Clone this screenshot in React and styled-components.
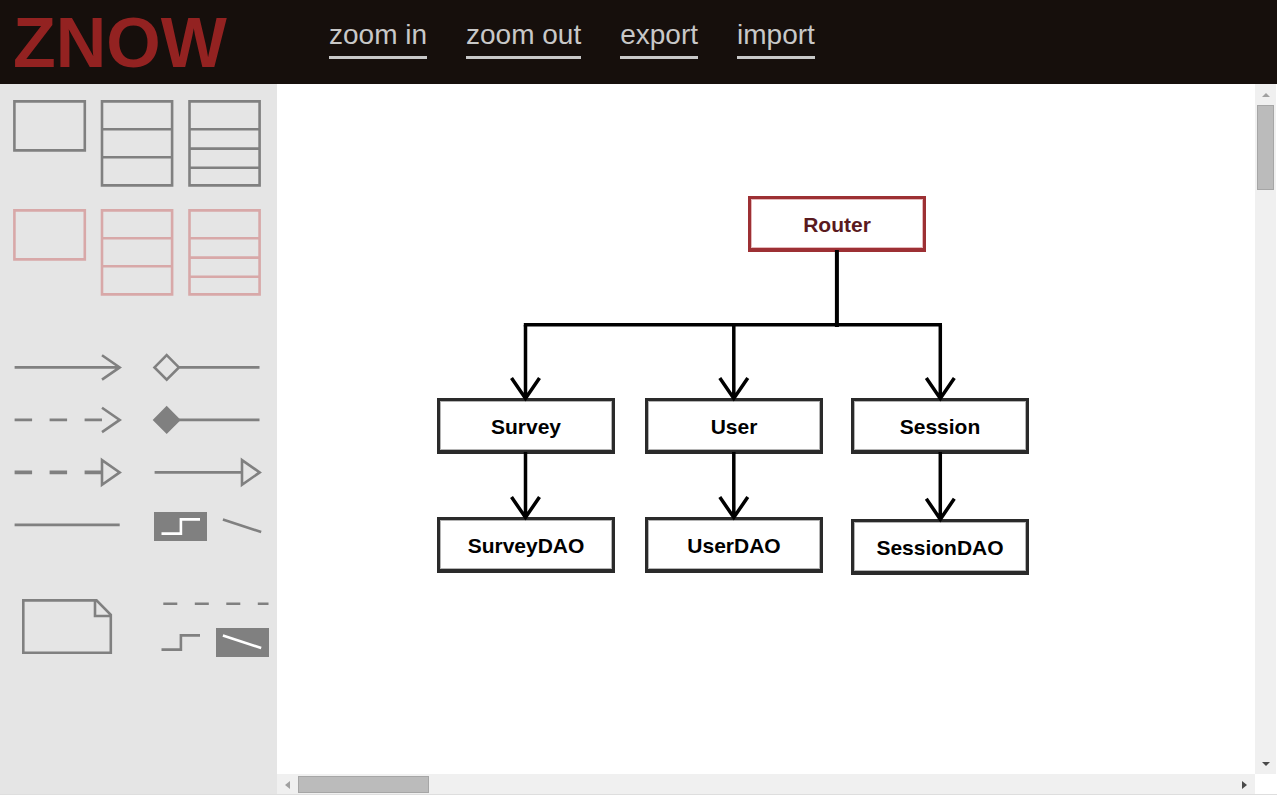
import React from "react";
import styled, { createGlobalStyle } from "styled-components";

const GlobalStyle = createGlobalStyle`
  * { box-sizing: border-box; }
  body {
    margin: 0;
    font-family: Arial, "Liberation Sans", sans-serif;
    background: #fff;
  }
`;

const Page = styled.div`
  display: flex;
  flex-direction: column;
  height: 100vh;
  border-bottom: 1px solid #dedede;
`;

const Header = styled.header`
  display: flex;
  flex: none;
  height: 84px;
  padding-left: 13px;
  background: #160f0c;
`;

const Logo = styled.h1`
  flex: none;
  width: 316px;
  margin: 0;
  font-size: 70px;
  line-height: 86px;
  font-weight: bold;
  color: #932221;
`;

const Nav = styled.nav`
  display: flex;
  align-items: flex-start;
  gap: 39px;
  padding-top: 18px;
`;

const NavLink = styled.a`
  height: 41px;
  border-bottom: 3px solid #c8c8c8;
  font-size: 28px;
  line-height: 34px;
  color: #c8c8c8;
  text-decoration: none;
  white-space: nowrap;
`;

const Main = styled.main`
  display: flex;
  flex: 1;
  min-height: 0;
`;

const Sidebar = styled.aside`
  flex: none;
  width: 277px;
  padding: 16px 8px 0 13px;
  background: #e5e5e5;
`;

const ShapeGrid = styled.section`
  display: grid;
  grid-template-columns: repeat(3, 73px);
  gap: 22px 15px;
  align-items: start;
`;

const ToolGrid = styled.section`
  display: grid;
  grid-template-columns: 109px 115px;
  column-gap: 32px;
  margin-top: ${(p) => (p.$top ? 46 : 45)}px;
  align-items: ${(p) => (p.$top ? "start" : "center")};
`;

const TileRow = styled.div`
  display: flex;
  gap: 9px;
`;

const TileStack = styled.div`
  display: flex;
  flex-direction: column;
  gap: 9px;
`;

const ToolButton = styled.button`
  display: block;
  padding: 0;
  border: 0;
  background: ${(p) => (p.$selected ? "#808080" : "transparent")};
  color: ${(p) => (p.$selected ? "#fff" : p.$pink ? "#d8a8a8" : "#808080")};
  cursor: pointer;
`;

const Drawing = styled.svg`
  display: block;
  overflow: visible;
  fill: none;
  stroke: currentColor;
  stroke-width: 2.6;
`;

const Stage = styled.div`
  display: grid;
  flex: 1;
  min-width: 0;
  grid-template-columns: minmax(0, 1fr) 21px;
  grid-template-rows: minmax(0, 1fr) 20px;
  padding-right: 1px;
`;

const Canvas = styled.div`
  position: relative;
  overflow: hidden;
  background: #fff;
`;

const Node = styled.div`
  position: absolute;
  left: ${(p) => p.$x}px;
  top: ${(p) => p.$y}px;
  display: flex;
  align-items: center;
  justify-content: center;
  width: 178px;
  height: 56px;
  padding-top: 2px;
  border: 3px solid ${(p) => (p.$red ? "#9d3034" : "#2a2a2a")};
  border-bottom-width: 4px;
  box-shadow: inset 0 0 0 1px ${(p) => (p.$red ? "#e5b9bb" : "#b4b4b4")};
  font-size: 21px;
  line-height: 24px;
  font-weight: bold;
  color: ${(p) => (p.$red ? "#5a1a1e" : "#000")};
`;

const Connectors = styled.svg`
  position: absolute;
  left: 0;
  top: 0;
  fill: none;
  stroke: #000;
  stroke-width: 3.5;
`;

const ScrollBar = styled.div`
  display: flex;
  flex-direction: ${(p) => (p.$vertical ? "column" : "row")};
  align-items: stretch;
  padding: ${(p) => (p.$vertical ? "0 2px" : "2px 0 1px")};
  background: #f0f0f0;
`;

const ScrollArrow = styled.button`
  display: flex;
  flex: none;
  align-items: center;
  justify-content: center;
  ${(p) => (p.$vertical ? "height" : "width")}: 21px;
  padding: 0;
  border: 0;
  background: transparent;
  color: ${(p) => (p.$dim ? "#a0a0a0" : "#4a4a4a")};

  svg { fill: currentColor; }
`;

const Track = styled.div`
  display: flex;
  flex: 1;
  flex-direction: ${(p) => (p.$vertical ? "column" : "row")};
`;

const Thumb = styled.div`
  flex: none;
  ${(p) => (p.$vertical ? "height: 85px" : "width: 131px")};
  border: 1px solid #a6a6a6;
  background: #bbb;
`;

function Tool({ label, width, height, pink, selected, children }) {
  return (
    <ToolButton type="button" aria-label={label} $pink={pink} $selected={selected}>
      <Drawing width={width} height={height} viewBox={`0 0 ${width} ${height}`}>
        {children}
      </Drawing>
    </ToolButton>
  );
}

function Shapes({ pink }) {
  const name = pink ? "highlighted " : "";
  return (
    <>
      <Tool label={`${name}box`} width={73} height={52} pink={pink}>
        <path d="M1.4 1.4H71.8V50.4H1.4Z" />
      </Tool>
      <Tool label={`${name}box with three sections`} width={73} height={87} pink={pink}>
        <path d="M1 1.4H71.1V85.4H1ZM1 29.2H71M1 57.2H71" />
      </Tool>
      <Tool label={`${name}box with four sections`} width={73} height={87} pink={pink}>
        <path d="M0.5 1.4H70.6V85.4H0.5ZM0.5 29.2H70.6M0.5 48.6H70.6M0.5 67.8H70.6" />
      </Tool>
    </>
  );
}

function StepTile({ selected }) {
  return (
    <Tool label="stepped line" width={53} height={29} selected={selected}>
      <path d="M7.5 21.6H26.9V7.4H46" />
    </Tool>
  );
}

function StraightTile({ selected }) {
  return (
    <Tool label="straight line" width={53} height={29} selected={selected}>
      <path d="M6.9 7.5L45.2 20" />
    </Tool>
  );
}

const nodes = [
  { text: "Router", x: 471, y: 112, red: true },
  { text: "Survey", x: 160, y: 314 },
  { text: "User", x: 368, y: 314 },
  { text: "Session", x: 574, y: 314 },
  { text: "SurveyDAO", x: 160, y: 433 },
  { text: "UserDAO", x: 368, y: 433 },
  { text: "SessionDAO", x: 574, y: 435 },
];

const arrows = [
  { x: 248.5, from: 241, to: 314.5 },
  { x: 456.8, from: 241, to: 314.5 },
  { x: 663.3, from: 241, to: 314.5 },
  { x: 248.5, from: 368, to: 433.5 },
  { x: 456.8, from: 368, to: 433.5 },
  { x: 663.3, from: 368, to: 435.3 },
];

const links = ["zoom in", "zoom out", "export", "import"];

export default function App() {
  return (
    <Page>
      <GlobalStyle />
      <Header>
        <Logo>ZNOW</Logo>
        <Nav>
          {links.map((text) => (
            <NavLink key={text} href="#">{text}</NavLink>
          ))}
        </Nav>
      </Header>
      <Main>
        <Sidebar>
          <ShapeGrid>
            <Shapes />
            <Shapes pink />
          </ShapeGrid>
          <ToolGrid>
            <Tool label="arrow" width={109} height={53}>
              <path d="M1.6 26.4H106M89 14.2L106.7 26.4L89 38.6" />
            </Tool>
            <Tool label="aggregation" width={109} height={53}>
              <path d="M12.7 14.2L24.9 26.4L12.7 38.6L0.5 26.4ZM25 26.4H105.5" />
            </Tool>
            <Tool label="dashed arrow" width={109} height={53}>
              <path d="M1.6 25.9H89" strokeDasharray="17.5" />
              <path d="M89 13.7L106.7 25.9L89 38.1" />
            </Tool>
            <Tool label="composition" width={109} height={53}>
              <path d="M12.7 13.7L24.9 25.9L12.7 38.1L0.5 25.9Z" fill="currentColor" />
              <path d="M25 25.9H105.5" />
            </Tool>
            <Tool label="realization" width={109} height={53}>
              <path d="M1.6 25.4H89" strokeDasharray="17.5" strokeWidth="3.6" />
              <path d="M89 13.1L106.7 25.4L89 37.7Z" />
            </Tool>
            <Tool label="inheritance" width={109} height={53}>
              <path d="M0.6 25.4H88M88 13.1L105.7 25.4L88 37.7Z" />
            </Tool>
            <Tool label="line" width={109} height={53}>
              <path d="M1.6 24.9H106.7" />
            </Tool>
            <TileRow>
              <StepTile selected />
              <StraightTile />
            </TileRow>
          </ToolGrid>
          <ToolGrid $top>
            <Tool label="note" width={109} height={56}>
              <path d="M10.3 1.4H83.5L97.8 15.9V53.7H10.3ZM82 1.4V17H97.8" />
            </Tool>
            <TileStack>
              <Tool label="dashed line" width={115} height={20}>
                <path d="M9.3 4.7H114.5" strokeDasharray="14 17.5" />
              </Tool>
              <TileRow>
                <StepTile />
                <StraightTile selected />
              </TileRow>
            </TileStack>
          </ToolGrid>
        </Sidebar>
        <Stage>
          <Canvas>
            {nodes.map((n) => (
              <Node key={n.text} $x={n.x} $y={n.y} $red={n.red}>{n.text}</Node>
            ))}
            <Connectors width="800" height="600" aria-hidden="true">
              <path d="M559.9 166V243" strokeWidth="4" />
              <path d="M246.8 240.8H665" />
              {arrows.map((a) => (
                <path
                  key={`${a.x}-${a.from}`}
                  d={`M${a.x} ${a.from}V${a.to}M${a.x - 14} ${a.to - 20.6}L${a.x} ${a.to}L${a.x + 14} ${a.to - 20.6}`}
                />
              ))}
            </Connectors>
          </Canvas>
          <ScrollBar $vertical>
            <ScrollArrow type="button" aria-label="scroll up" $vertical $dim>
              <svg width="8" height="4"><path d="M0 4L4 0L8 4Z" /></svg>
            </ScrollArrow>
            <Track $vertical><Thumb $vertical /></Track>
            <ScrollArrow type="button" aria-label="scroll down" $vertical>
              <svg width="8" height="4"><path d="M0 0L4 4L8 0Z" /></svg>
            </ScrollArrow>
          </ScrollBar>
          <ScrollBar>
            <ScrollArrow type="button" aria-label="scroll left" $dim>
              <svg width="5" height="8"><path d="M5 0L0 4L5 8Z" /></svg>
            </ScrollArrow>
            <Track><Thumb /></Track>
            <ScrollArrow type="button" aria-label="scroll right">
              <svg width="5" height="8"><path d="M0 0L5 4L0 8Z" /></svg>
            </ScrollArrow>
          </ScrollBar>
        </Stage>
      </Main>
    </Page>
  );
}
